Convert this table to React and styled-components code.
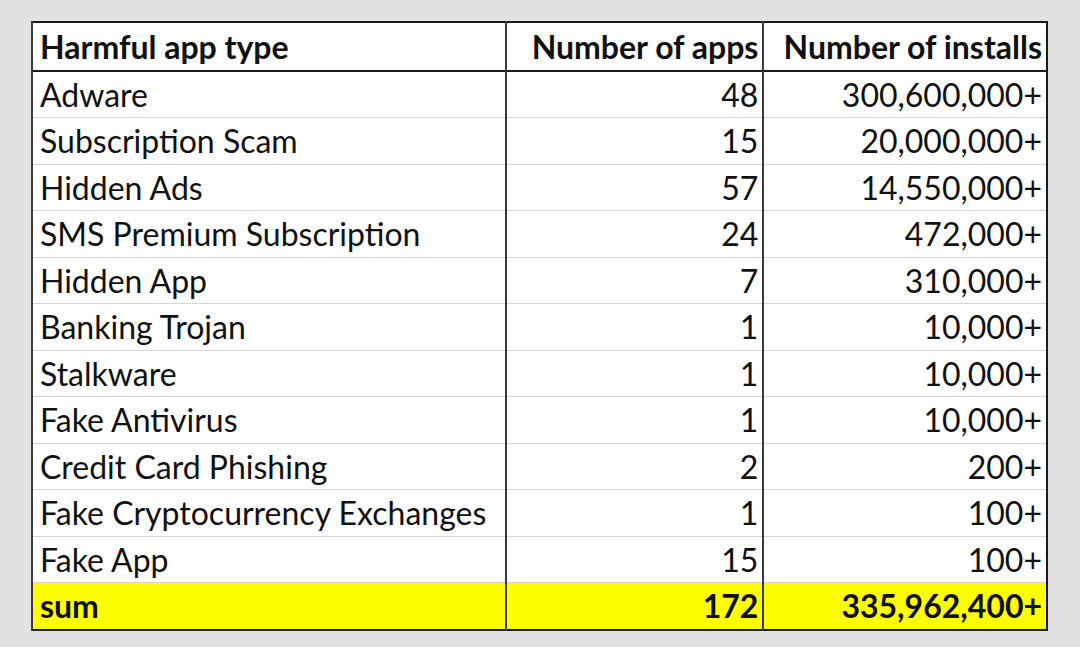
import React from 'react';
import styled, { createGlobalStyle } from 'styled-components';

const rows = [
  ['Adware', '48', '300,600,000+'],
  ['Subscription Scam', '15', '20,000,000+'],
  ['Hidden Ads', '57', '14,550,000+'],
  ['SMS Premium Subscription', '24', '472,000+'],
  ['Hidden App', '7', '310,000+'],
  ['Banking Trojan', '1', '10,000+'],
  ['Stalkware', '1', '10,000+'],
  ['Fake Antivirus', '1', '10,000+'],
  ['Credit Card Phishing', '2', '200+'],
  ['Fake Cryptocurrency Exchanges', '1', '100+'],
  ['Fake App', '15', '100+'],
];

const App = () => {
  return (
    <>
      <GlobalStyle />
      <Page>
        <Table>
          <colgroup>
            <col style={{ width: 473 }} />
            <col style={{ width: 257 }} />
            <col style={{ width: 283 }} />
          </colgroup>
          <thead>
            <HeadRow>
              <HeadCell>Harmful app type</HeadCell>
              <HeadCell $right>Number of apps</HeadCell>
              <HeadCell $right>Number of installs</HeadCell>
            </HeadRow>
          </thead>
          <tbody>
            {rows.map(([type, apps, installs]) => (
              <Row key={type}>
                <Cell>{type}</Cell>
                <Cell $right>{apps}</Cell>
                <Cell $right>{installs}</Cell>
              </Row>
            ))}
            <SumRow>
              <Cell $bold>sum</Cell>
              <Cell $right $bold>172</Cell>
              <Cell $right $bold>335,962,400+</Cell>
            </SumRow>
          </tbody>
        </Table>
      </Page>
    </>
  );
};

export default App;

const GlobalStyle = createGlobalStyle`
  html, body {
    margin: 0;
    padding: 0;
    background: #e2e2e2;
  }
`;

const Page = styled.div`
  width: 1080px;
  height: 647px;
  padding: 21px 0 0 31px;
  box-sizing: border-box;
  font-family: Lato, "Open Sans", sans-serif;
  color: #111;
`;

const Table = styled.table`
  border-collapse: collapse;
  table-layout: fixed;
  width: 1017px;
  background: #fff;
  border: 2px solid #1a1a1a;
`;

const HeadRow = styled.tr`
  height: 49px;
  border-bottom: 2px solid #1a1a1a;
`;

const HeadCell = styled.th`
  font-size: 32px;
  font-weight: 700;
  padding: 0 4px 0 7px;
  text-align: ${(p) => (p.$right ? 'right' : 'left')};
  border-left: 2px solid #3a3a3a;
  white-space: nowrap;
  overflow: hidden;
`;

const Row = styled.tr`
  height: 46.5px;
  border-bottom: 1px solid #d6d6d6;
`;

const SumRow = styled.tr`
  height: 47px;
  background: #ffff00;
`;

const Cell = styled.td`
  font-size: 32px;
  font-weight: ${(p) => (p.$bold ? 700 : 400)};
  padding: 0 4px 0 7px;
  text-align: ${(p) => (p.$right ? 'right' : 'left')};
  border-left: 2px solid #3a3a3a;
  white-space: nowrap;
  overflow: hidden;
`;
